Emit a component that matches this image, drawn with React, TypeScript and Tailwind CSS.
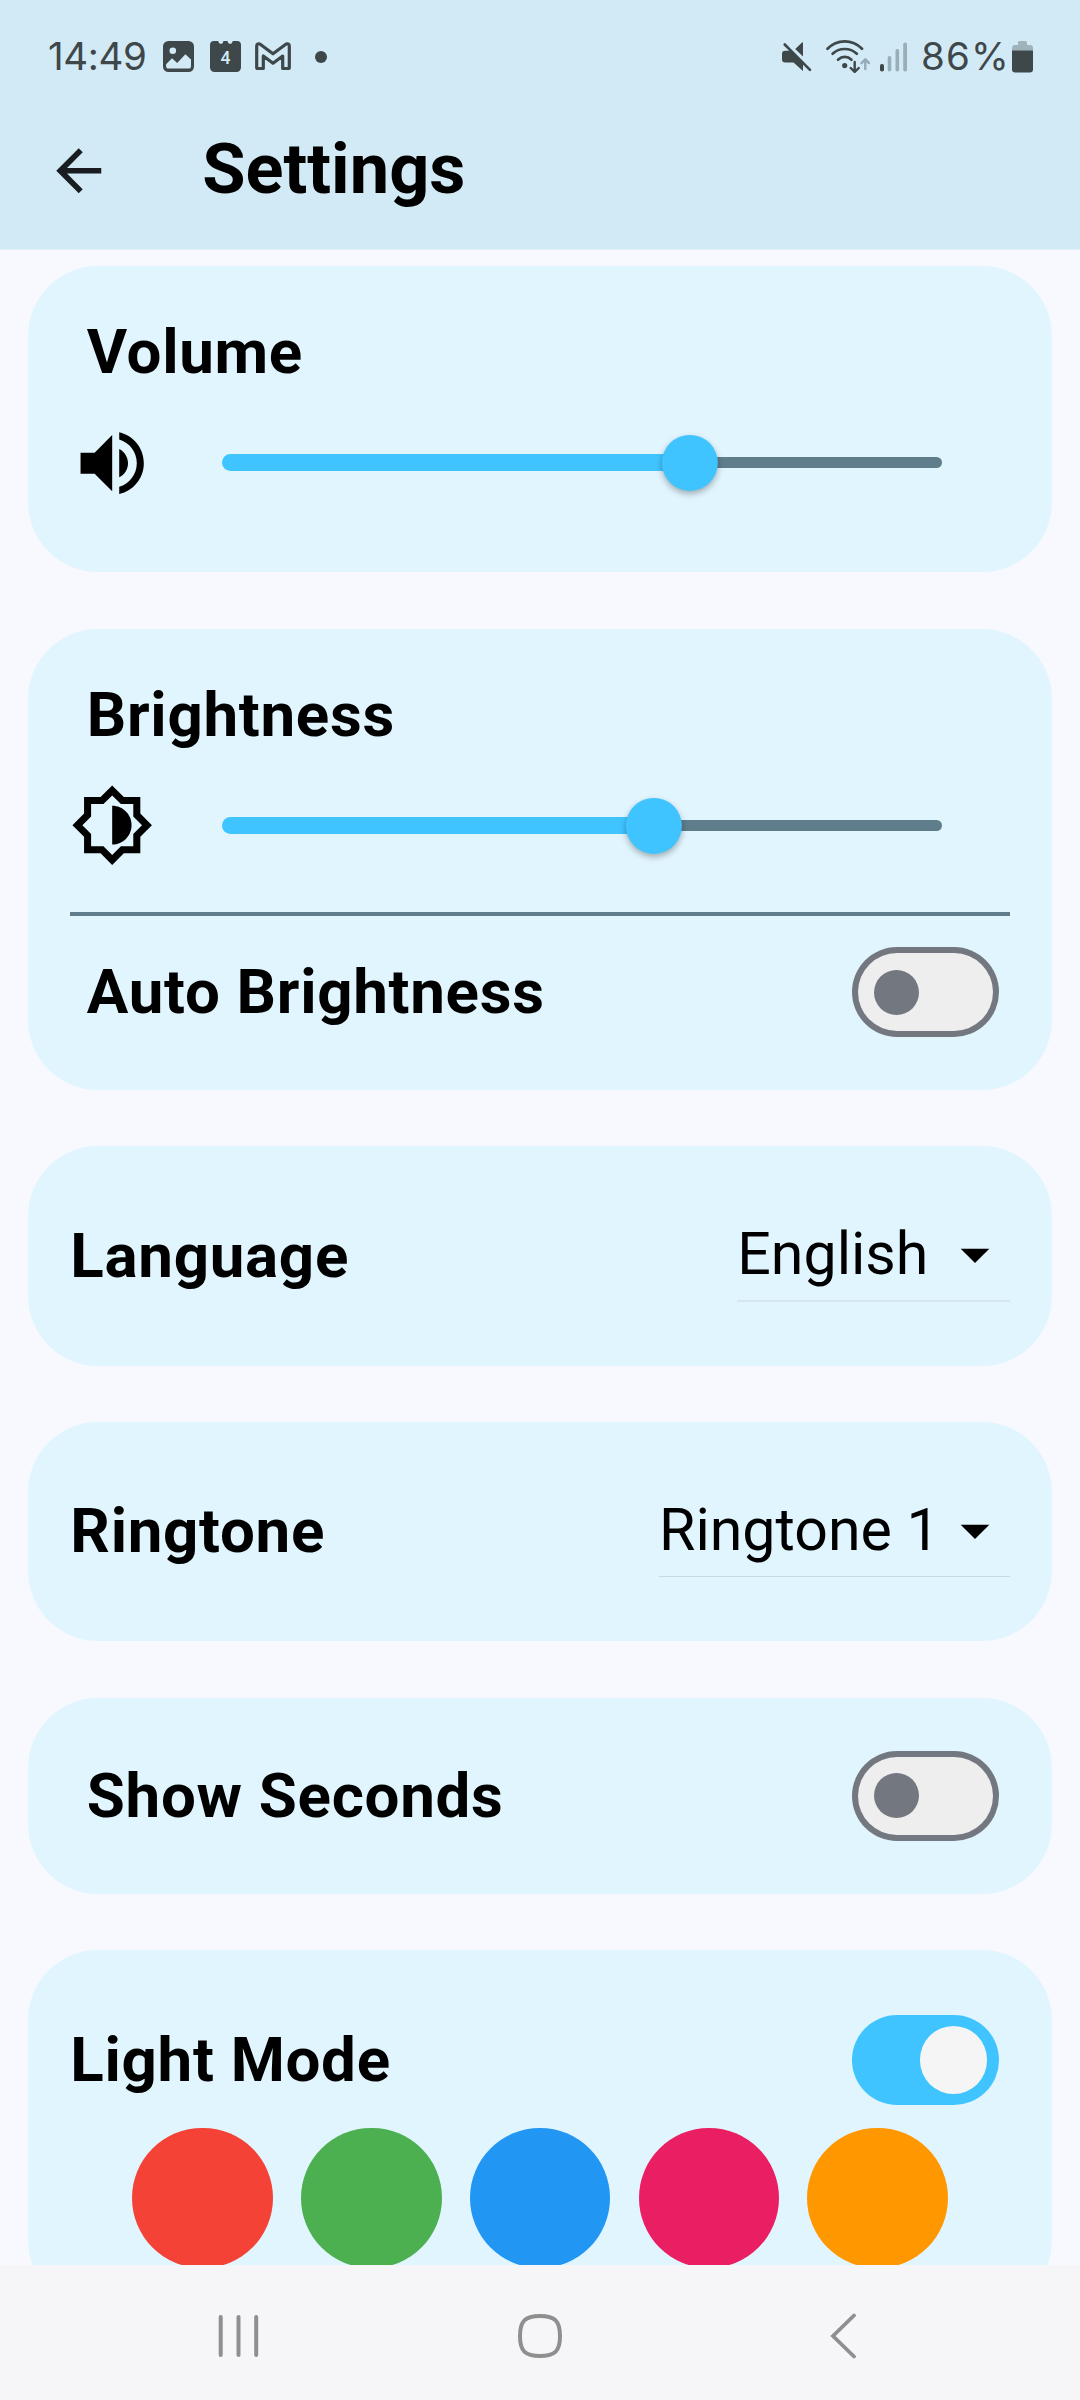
import type { ReactNode } from "react";

function StatusBar() {
  return (
    <div className="flex h-[92px] items-center pt-[21px] pr-[47px] pl-[47px] text-[#3e4749]">
      <span className="w-[116px] pl-px font-['Inter',sans-serif] text-[38.5px] leading-none font-normal tracking-[-0.4px] whitespace-nowrap">
        14:49
      </span>
      <svg width="31" height="31" viewBox="0 0 31 31">
        <rect width="31" height="31" rx="5.5" fill="currentColor" />
        <circle cx="9.8" cy="9.8" r="3.3" fill="#d2eaf6" />
        <path d="M3.1 23.2 9 17.3l5.2 4.6 8.2-8.6 5.6 5.2V25a2.6 2.6 0 0 1-2.6 2.6H5.7A2.6 2.6 0 0 1 3.1 25z" fill="#d2eaf6" />
      </svg>
      <div className="relative ml-4 h-[31px] w-[31px]">
        <svg width="31" height="31" viewBox="0 0 31 31">
          <path
            d="M4 0h3.6c.6 0 .9.6 1.1 1.2.7 2.2 3.6 2.2 4.3 0 .2-.6.5-1.2 1.1-1.2h2.8c.6 0 .9.6 1.1 1.2.7 2.2 3.6 2.2 4.3 0C22.5.6 22.8 0 23.4 0H27a4 4 0 0 1 4 4v22.5a4.5 4.5 0 0 1-4.5 4.5h-22A4.5 4.5 0 0 1 0 26.5V4a4 4 0 0 1 4-4z"
            fill="currentColor"
          />
        </svg>
        <span className="absolute inset-0 pt-[3px] text-center font-['Roboto',sans-serif] text-[17.5px] leading-[29px] font-medium text-[#d2eaf6]">
          4
        </span>
      </div>
      <svg className="ml-[13.5px]" width="36" height="29" viewBox="0 0 36 29" fill="none" stroke="currentColor" strokeWidth="3.2" strokeLinejoin="round">
        <path d="M1.7 25.5V4a2.2 2.2 0 0 1 3.5-1.8L18 11.8 30.8 2.2A2.2 2.2 0 0 1 34.3 4v21.5a1 1 0 0 1-1 1h-5.6V14L18 21.3 8.3 14v12.5H2.7a1 1 0 0 1-1-1z" />
      </svg>
      <span className="ml-[24.5px] h-3 w-3 rounded-full bg-[#3e4749]" />

      <svg className="ml-auto" width="30" height="30" viewBox="0 0 30 30">
        <path d="M3.2 8.7h5.5L21 21v8l-9.5-8.5H3.2A3.2 3.2 0 0 1 0 17.3v-5.4a3.2 3.2 0 0 1 3.2-3.2zM21 .6v14L13.2 6.9 19.5.9C20.2.3 21-.2 21 .6z" fill="currentColor" />
        <path d="M2.7 2.5 28 27.8" stroke="currentColor" strokeWidth="2.6" strokeLinecap="round" />
      </svg>
      <svg className="ml-3.5" width="44" height="33" viewBox="0 0 44 33" fill="none" strokeWidth="2.7" strokeLinecap="round" strokeLinejoin="round">
        <g stroke="currentColor">
          <path d="M1.5 8.8C11-1.1 26.4-1.1 36 8.8" />
          <path d="M6.6 13.8c6.6-6.4 17.6-6.4 24.2 0" />
          <path d="M12 19.7c4-3.7 9.5-3.7 13.5 0" />
          <path d="M28.7 22v9.5m-4-3.500 4 4 4-4" strokeWidth="2.4" />
        </g>
        <circle cx="18.7" cy="25.6" r="2.6" fill="currentColor" />
        <path d="M39.3 29V19.5m-3.8 3.600 3.800-3.800 3.800 3.800" stroke="#97abb4" strokeWidth="2.4" />
      </svg>
      <svg className="ml-2.5" width="27" height="30" viewBox="0 0 27 30" fill="#9aaeb7">
        <rect x="0" y="22" width="4" height="7.5" rx="1.8" fill="#3e4749" />
        <rect x="7.7" y="14" width="3.6" height="15.5" rx="1.8" />
        <rect x="15.5" y="7" width="3.6" height="22.5" rx="1.8" />
        <rect x="23.2" y="0.5" width="3.8" height="29" rx="1.8" />
      </svg>
      <span className="ml-3.5 w-[91px] font-['Inter',sans-serif] text-[38.5px] leading-none font-normal tracking-[1.1px] whitespace-nowrap">
        86%
      </span>
      <svg width="21" height="32" viewBox="0 0 21 32">
        <path d="M0 9.7V7a3 3 0 0 1 3-3h3V1.500A1.500 1.500 0 0 1 7.500 0h6A1.500 1.500 0 0 1 15 1.500V4h3a3 3 0 0 1 3 3v2.700z" fill="#9fb3bc" />
        <path d="M0 9.500h21v18.700a3.200 3.200 0 0 1-3.200 3.200H3.200A3.200 3.200 0 0 1 0 28.200z" fill="currentColor" />
      </svg>
    </div>
  );
}

function AppBar() {
  return (
    <div className="flex h-[157px] items-center pl-[44.8px]">
      <svg width="67.5" height="67.5" viewBox="0 0 24 24" fill="#191c20">
        <path d="M20 11H7.83l5.59-5.59L12 4l-8 8 8 8 1.41-1.41L7.83 13H20v-2z" />
      </svg>
      <h1 className="ml-[90px] pb-[3px] text-[70.3px] leading-none font-bold">Settings</h1>
    </div>
  );
}

function Card({ className, children }: { className: string; children: ReactNode }) {
  return <section className={`rounded-[70px] bg-[#e1f5fe] pr-[42px] pl-[42.3px] ${className}`}>{children}</section>;
}

function Label({ children }: { children: ReactNode }) {
  return (
    <span className="block text-[61.875px] leading-[84px] font-bold tracking-[0.703px] whitespace-nowrap">{children}</span>
  );
}

function SliderRow({ icon, value }: { icon: ReactNode; value: number }) {
  return (
    <div className="mt-[26.5px] flex h-[84.4px] items-center">
      {icon}
      <div className="relative ml-[67.4px] flex h-[17px] w-[720px] items-center">
        <div className="h-[17px] rounded-l-full bg-[#40c4ff]" style={{ width: `${value}%` }} />
        <div className="h-[11.5px] flex-1 rounded-r-full bg-[#607d8b]" />
        <div
          className="absolute top-1/2 h-[56.25px] w-[56.25px] -translate-x-1/2 -translate-y-1/2 rounded-full bg-[#40c4ff] shadow-[0_3px_6px_rgba(0,0,0,0.3)]"
          style={{ left: `${value}%` }}
        />
      </div>
    </div>
  );
}

function Toggle({ on = false }: { on?: boolean }) {
  return on ? (
    <div className="mr-[11.5px] flex h-[90px] w-[146.25px] items-center justify-end rounded-full bg-[#40c4ff] pr-[11.25px]">
      <div className="h-[67.5px] w-[67.5px] rounded-full bg-[#f5f5f5]" />
    </div>
  ) : (
    <div className="mr-[11.5px] flex h-[90px] w-[146.25px] items-center rounded-full bg-[#73777f] p-[5.6px]">
      <div className="flex h-full w-full items-center rounded-full bg-[#eeeeee] pl-[16.6px]">
        <div className="h-[45px] w-[45px] rounded-full bg-[#73777f]" />
      </div>
    </div>
  );
}

function Select({ className, value }: { className: string; value: string }) {
  return (
    <div className={`flex items-center justify-between ${className}`}>
      <span className="pb-0.5 text-[59.06px] leading-[70px] whitespace-nowrap">{value}</span>
      <svg className="mr-5 mt-[3px] shrink-0" width="30" height="16" viewBox="0 0 30 16">
        <path d="M.7.8h28.600L15 15.100z" />
      </svg>
    </div>
  );
}

function VolumeIcon() {
  return (
    <svg width="84.375" height="84.375" viewBox="0 0 24 24">
      <path d="M3 9v6h4l5 5V4L7 9H3zm13.5 3c0-1.77-1.02-3.29-2.5-4.03v8.05c1.48-.73 2.5-2.25 2.5-4.02zM14 3.23v2.06c2.89.86 5 3.54 5 6.71s-2.11 5.85-5 6.71v2.06c4.01-.91 7-4.49 7-8.77s-2.99-7.86-7-8.77z" />
    </svg>
  );
}

function BrightnessIcon() {
  return (
    <svg width="84.375" height="84.375" viewBox="0 0 24 24">
      <path d="M20 8.69V4h-4.69L12 .69 8.69 4H4v4.69L.69 12 4 15.31V20h4.69L12 23.31 15.31 20H20v-4.69L23.31 12 20 8.69zm-2 5.79V18h-3.52L12 20.48 9.52 18H6v-3.52L3.52 12 6 9.52V6h3.52L12 3.52 14.48 6H18v3.52L20.48 12 18 14.48z" />
      <path d="M12 6.5v11c3.03 0 5.5-2.47 5.5-5.5S15.03 6.5 12 6.5z" />
    </svg>
  );
}

function NavBar() {
  return (
    <nav className="flex h-[135px] items-center bg-[#f6f6f9] pt-[7px] pl-[217.5px]">
      <svg width="41" height="44" viewBox="0 0 41 44" stroke="#8f8f8f" strokeWidth="4" strokeLinecap="round">
        <path d="M2.7 3v38M20.500 3v38M38.200 3v38" />
      </svg>
      <svg className="ml-[259.5px]" width="44" height="44" viewBox="0 0 44 44" fill="none" stroke="#8f8f8f" strokeWidth="4">
        <path d="M22 2c15 0 20 5 20 20s-5 20-20 20S2 37 2 22 7 2 22 2z" />
      </svg>
      <svg className="ml-[268px]" width="28" height="46" viewBox="0 0 28 46" fill="none" stroke="#8f8f8f" strokeWidth="3.8" strokeLinecap="round">
        <path d="M24 2.500 3 23l21 20.500" />
      </svg>
    </nav>
  );
}

const SWATCHES = ["bg-[#f44336]", "bg-[#4caf50]", "bg-[#2196f3]", "bg-[#e91e63]", "bg-[#ff9800]"];

export default function App() {
  return (
    <div className="flex h-[2400px] w-[1080px] flex-col overflow-hidden bg-[#f8f9ff] font-['Roboto',sans-serif] text-black">
      <header className="h-[250px] shrink-0 border-b border-[#e6f0f9] bg-[#d2eaf6]">
        <StatusBar />
        <AppBar />
      </header>

      <main className="h-[2015px] shrink-0 overflow-hidden px-7 pt-4">
        <Card className="h-[306.4px] pt-11">
          <div className="pl-[16.5px]">
            <Label>Volume</Label>
          </div>
          <SliderRow icon={<VolumeIcon />} value={65} />
        </Card>

        <Card className="mt-[56.6px] h-[461px] pt-11">
          <div className="pl-[16.5px]">
            <Label>Brightness</Label>
          </div>
          <SliderRow icon={<BrightnessIcon />} value={60} />
          <div className="mt-11 h-[4.2px] bg-[#607d8b]" />
          <div className="mt-[31px] flex items-center justify-between pl-[16.5px]">
            <Label>Auto Brightness</Label>
            <Toggle />
          </div>
        </Card>

        <Card className="mt-14 flex h-[219.6px] items-center justify-between">
          <Label>Language</Label>
          <Select className="h-[92px] w-[272.7px] border-b-2 border-[#d6e6ee]" value="English" />
        </Card>

        <Card className="mt-[56.4px] flex h-[219px] items-center justify-between">
          <Label>Ringtone</Label>
          <Select className="h-[91px] w-[351px] border-b border-[#c8d9e2]" value="Ringtone 1" />
        </Card>

        <Card className="mt-[57px] flex h-[196px] items-center justify-between">
          <div className="pl-[16.5px]">
            <Label>Show Seconds</Label>
          </div>
          <Toggle />
        </Card>

        <Card className="mt-14 h-[360px] pt-[65px]">
          <div className="flex items-center justify-between">
            <Label>Light Mode</Label>
            <Toggle on />
          </div>
          <div className="mt-[22.7px] flex justify-center gap-[28.125px]">
            {SWATCHES.map((color) => (
              <div key={color} className={`h-[140.625px] w-[140.625px] shrink-0 rounded-full ${color}`} />
            ))}
          </div>
        </Card>
      </main>

      <NavBar />
    </div>
  );
}
